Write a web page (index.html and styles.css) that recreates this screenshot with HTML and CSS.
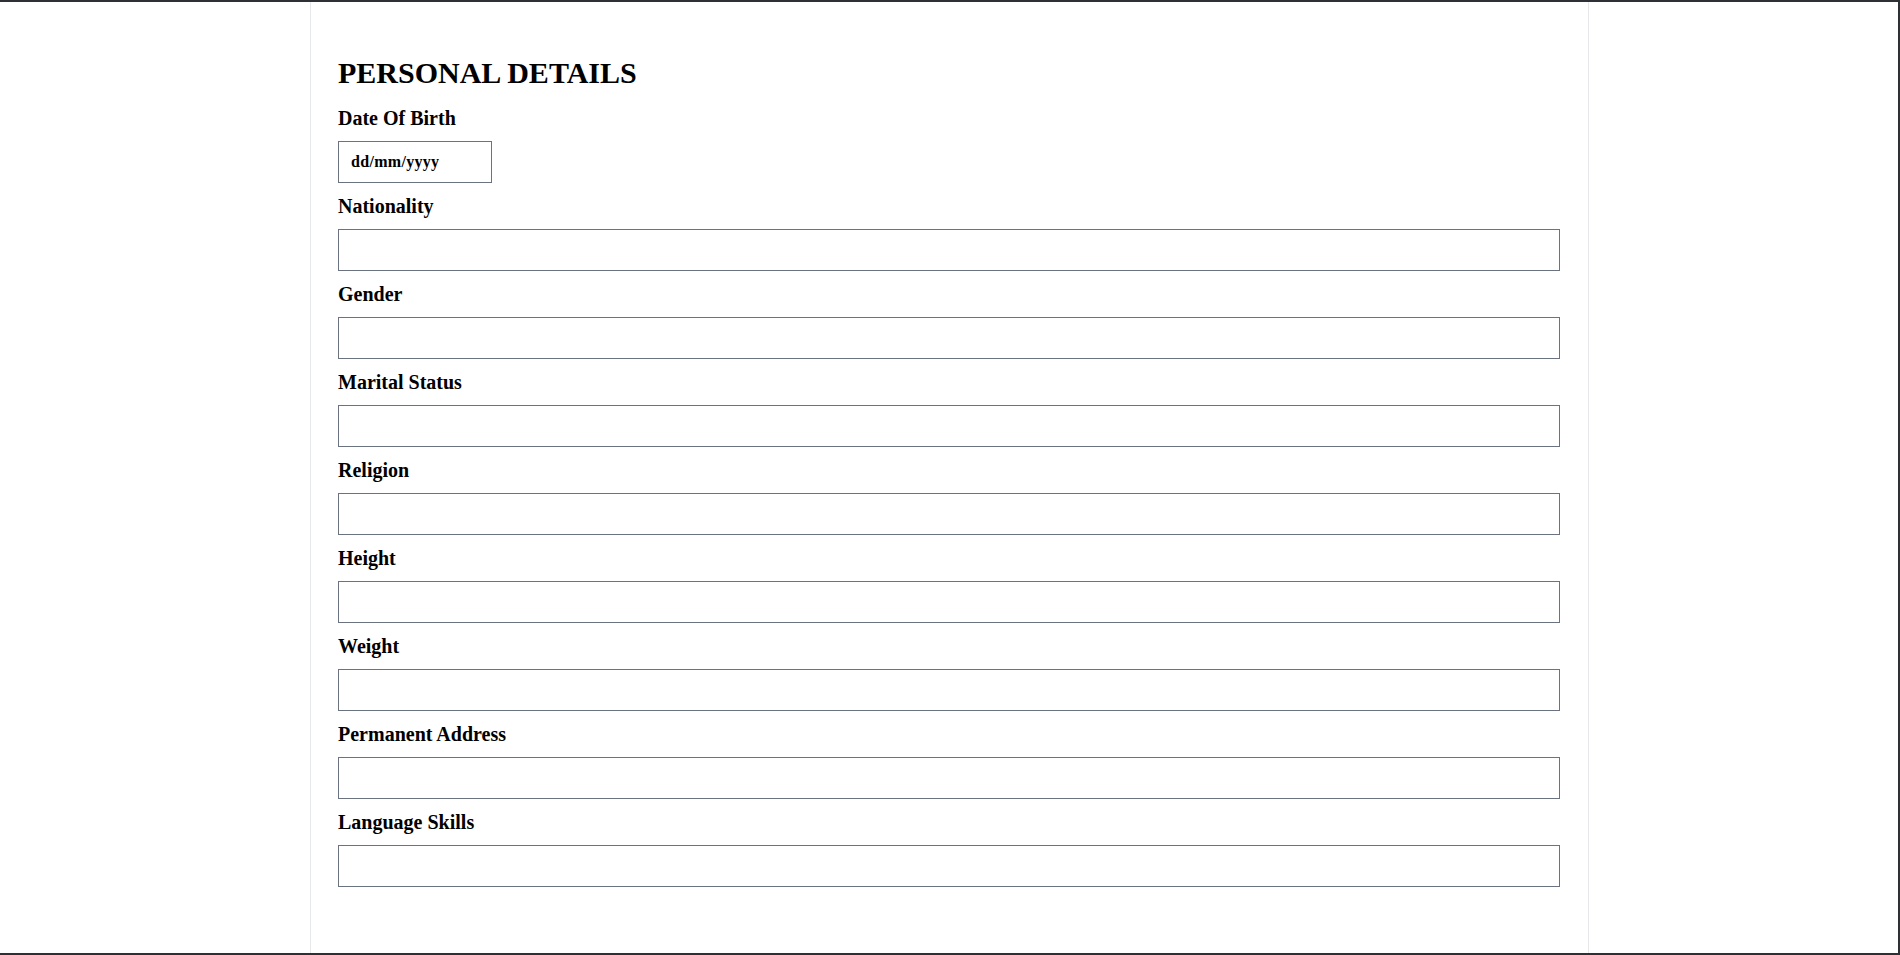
FILE: index.html
```html
<!DOCTYPE html>
<html lang="en">
<head>
<meta charset="utf-8">
<title>Personal Details</title>
<link rel="stylesheet" href="styles.css">
</head>
<body>
<div class="frame">
  <main class="sheet">
    <h1 class="title">PERSONAL DETAILS</h1>
    <form class="form">
      <div class="field">
        <label class="label" for="dob">Date Of Birth</label>
        <input class="input input-date" id="dob" type="text" placeholder="dd/mm/yyyy">
      </div>
      <div class="field">
        <label class="label" for="nat">Nationality</label>
        <input class="input" id="nat" type="text">
      </div>
      <div class="field">
        <label class="label" for="gen">Gender</label>
        <input class="input" id="gen" type="text">
      </div>
      <div class="field">
        <label class="label" for="mar">Marital Status</label>
        <input class="input" id="mar" type="text">
      </div>
      <div class="field">
        <label class="label" for="rel">Religion</label>
        <input class="input" id="rel" type="text">
      </div>
      <div class="field">
        <label class="label" for="hei">Height</label>
        <input class="input" id="hei" type="text">
      </div>
      <div class="field">
        <label class="label" for="wei">Weight</label>
        <input class="input" id="wei" type="text">
      </div>
      <div class="field">
        <label class="label" for="adr">Permanent Address</label>
        <input class="input" id="adr" type="text">
      </div>
      <div class="field">
        <label class="label" for="lan">Language Skills</label>
        <input class="input" id="lan" type="text">
      </div>
    </form>
  </main>
</div>
</body>
</html>
```

FILE: styles.css
```css
* {
  box-sizing: border-box;
}

html, body {
  margin: 0;
  padding: 0;
  background: #ffffff;
}

body {
  font-family: "Liberation Serif", "Times New Roman", serif;
  color: #000000;
  overflow: hidden;
}

.frame {
  width: 1900px;
  height: 955px;
  border-top: 2px solid #2d3035;
  border-right: 2px solid #2d3035;
  border-bottom: 2px solid #2d3035;
  display: flex;
  padding-left: 310px;
}

.sheet {
  width: 1279px;
  border-left: 1px solid #e5e7eb;
  border-right: 1px solid #e5e7eb;
  padding: 53px 28px 0 27px;
}

.title {
  margin: 0 0 16px 0;
  font-size: 30px;
  line-height: 36px;
  font-weight: 700;
}

.form {
  display: flex;
  flex-direction: column;
  gap: 12px;
}

.field {
  display: flex;
  flex-direction: column;
  align-items: flex-start;
}

.label {
  font-size: 20px;
  line-height: 22px;
  font-weight: 700;
  margin-bottom: 12px;
}

.input {
  width: 100%;
  height: 42px;
  border: 1px solid #6b7280;
  border-radius: 0;
  padding: 8px 12px;
  font-family: "Liberation Serif", "Times New Roman", serif;
  font-size: 16px;
  line-height: 24px;
  font-weight: 700;
  color: #000000;
  background: #ffffff;
  outline: none;
}

.input-date {
  width: 154px;
  letter-spacing: 0.3px;
}

.input-date::placeholder {
  color: #000000;
  opacity: 1;
}
```
